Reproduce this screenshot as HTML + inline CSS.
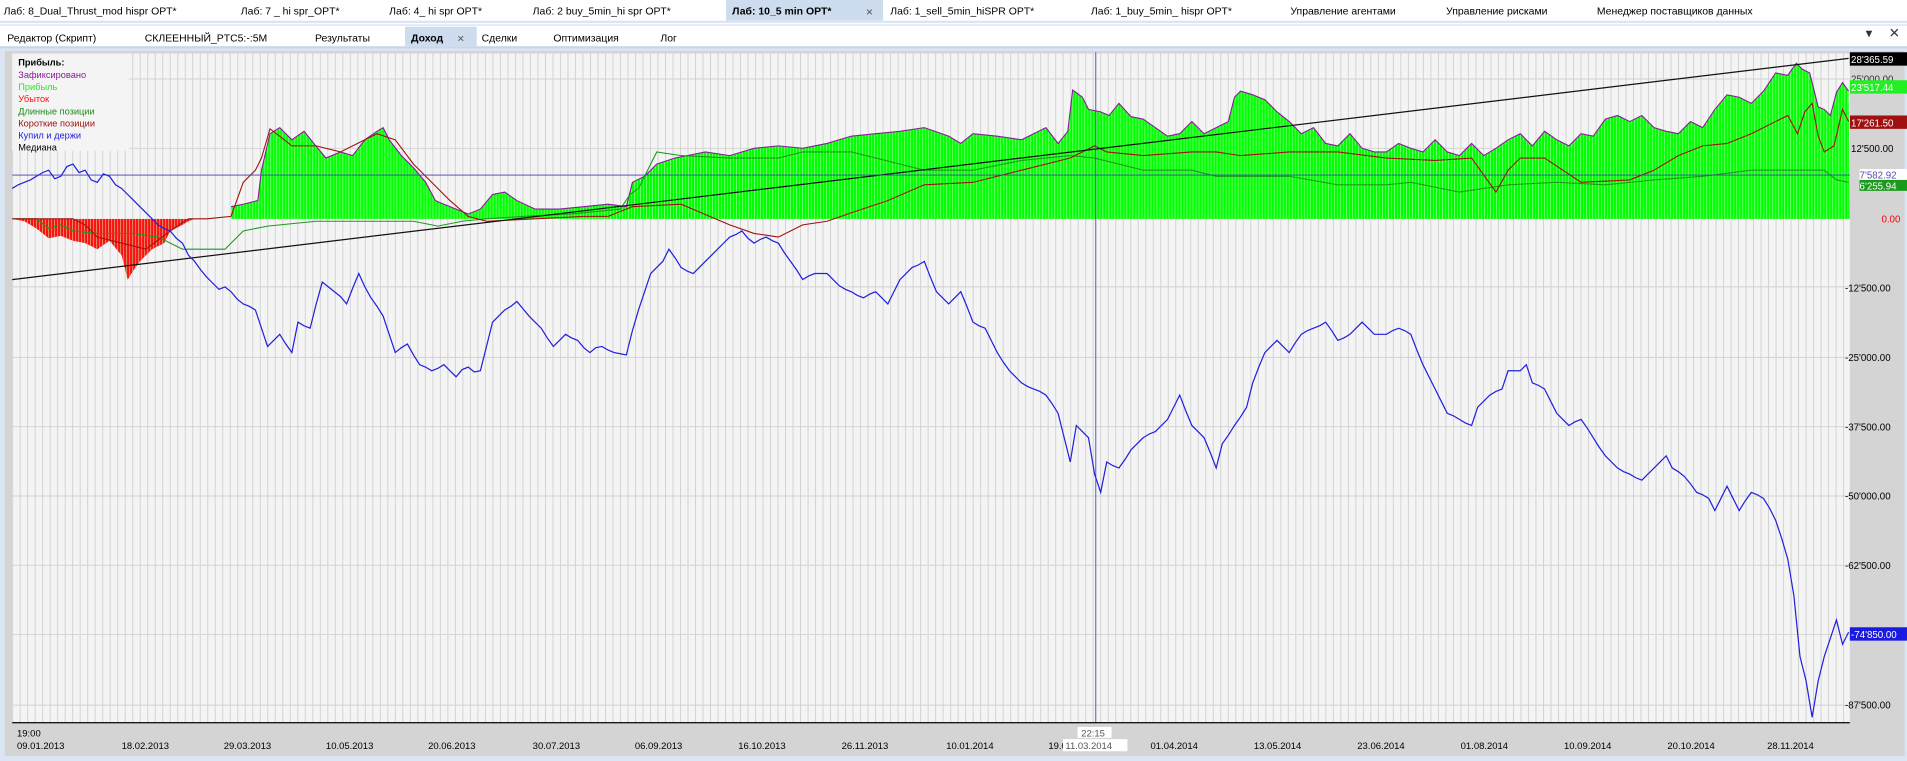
<!DOCTYPE html>
<html><head><meta charset="utf-8"><style>
html,body{margin:0;padding:0;background:#fff;overflow:hidden}
svg{display:block}
text{font-family:"Liberation Sans","DejaVu Sans",sans-serif}
</style></head><body>
<svg width="1907" height="761" viewBox="0 0 1568 626" preserveAspectRatio="none" xmlns="http://www.w3.org/2000/svg">
<defs>
<pattern id="vg" x="10" y="0" width="6.17" height="626" patternUnits="userSpaceOnUse"><rect x="0" y="0" width="0.8" height="626" fill="#d2d2d2"/></pattern>
<pattern id="bs" x="10" y="0" width="2.47" height="626" patternUnits="userSpaceOnUse"><rect x="0" y="0" width="0.45" height="626" fill="#b8f8b8"/></pattern>
<clipPath id="gc"><polygon id="gp" points="190,170 200,168 212,165 215,140 222,110 230,105 240,115 250,108 258,118 268,130 280,125 290,128 300,115 310,108 315,105 320,115 330,128 340,138 350,150 358,165 365,168 375,172 385,176 395,172 405,160 415,158 425,165 440,172 460,172 480,170 500,168 515,170 520,150 530,145 540,135 555,130 565,128 580,125 600,128 620,122 640,120 660,122 680,118 700,112 720,110 740,108 760,105 780,112 790,118 800,110 820,112 840,115 860,105 870,118 878,108 882,74 890,80 895,90 905,92 912,95 920,85 930,96 940,98 950,105 960,112 970,110 980,100 990,110 1000,105 1010,100 1015,80 1020,75 1030,78 1040,82 1050,92 1060,100 1070,110 1080,105 1090,118 1100,120 1110,110 1120,122 1130,125 1140,125 1150,118 1160,122 1170,125 1180,115 1190,125 1200,128 1210,118 1220,128 1230,122 1240,115 1250,110 1260,120 1270,108 1280,115 1290,120 1300,110 1310,112 1320,98 1330,95 1340,100 1350,95 1360,105 1370,108 1380,110 1390,100 1400,105 1410,90 1420,78 1430,80 1440,85 1450,75 1460,60 1470,62 1477,52 1482,57 1488,60 1495,88 1500,90 1505,95 1510,76 1515,68 1520,75 1521,180 190,180"/><polygon points="10,180 20,182 30,188 40,196 50,194 60,198 70,200 80,205 90,198 100,210 105,230 110,222 115,215 125,205 135,200 140,190 150,185 155,182 160,180"/></clipPath>
</defs>
<rect width="1568" height="626" fill="#fff"/>
<rect x="0" y="17" width="1568" height="2" fill="#dbe5f3"/>
<rect x="597" y="0" width="129" height="17" fill="#cddcee"/>
<g font-size="8.6" fill="#000">
<text x="3" y="12">Лаб: 8_Dual_Thrust_mod hispr OPT*</text>
<text x="198" y="12">Лаб: 7 _ hi spr_OPT*</text>
<text x="320" y="12">Лаб: 4_ hi spr OPT*</text>
<text x="438" y="12">Лаб: 2 buy_5min_hi spr OPT*</text>
<text x="602" y="12" font-weight="bold">Лаб: 10_5 min OPT*</text>
<text x="712" y="13" font-size="10" fill="#555">×</text>
<text x="732" y="12">Лаб: 1_sell_5min_hiSPR OPT*</text>
<text x="897" y="12">Лаб: 1_buy_5min_ hispr OPT*</text>
<text x="1061" y="12">Управление агентами</text>
<text x="1189" y="12">Управление рисками</text>
<text x="1313" y="12">Менеджер поставщиков данных</text>
</g>
<text x="1534" y="31" font-size="11" fill="#333">▾</text>
<text x="1553" y="31" font-size="11" fill="#333">✕</text>
<rect x="0" y="20" width="1568" height="1.2" fill="#dbe5f3"/>
<rect x="333" y="22" width="59" height="16" fill="#cddcee"/>
<rect x="0" y="38" width="1568" height="2" fill="#c7d6ec"/>
<g font-size="8.6" fill="#000">
<text x="6" y="34">Редактор (Скрипт)</text>
<text x="119" y="34">СКЛЕЕННЫЙ_PTC5:-:5M</text>
<text x="259" y="34">Результаты</text>
<text x="338" y="34" font-weight="bold">Доход</text>
<text x="376" y="35" font-size="10" fill="#555">×</text>
<text x="396" y="34">Сделки</text>
<text x="455" y="34">Оптимизация</text>
<text x="543" y="34">Лог</text>
</g>
<rect x="0" y="40" width="1568" height="586" fill="#dbe5f3"/>
<rect x="4" y="42" width="1562" height="580" fill="#d4d4d4"/>
<rect x="10" y="43" width="1511" height="551" fill="#f4f4f4"/>
<rect x="10" y="43" width="1511" height="551" fill="url(#vg)"/>
<g stroke="#d2d2d2" stroke-width="0.8">
<line x1="10" y1="65" x2="1521" y2="65"/><line x1="10" y1="122" x2="1521" y2="122"/>
<line x1="10" y1="236" x2="1521" y2="236"/><line x1="10" y1="294" x2="1521" y2="294"/>
<line x1="10" y1="351" x2="1521" y2="351"/><line x1="10" y1="408" x2="1521" y2="408"/>
<line x1="10" y1="465" x2="1521" y2="465"/><line x1="10" y1="522" x2="1521" y2="522"/>
<line x1="10" y1="580" x2="1521" y2="580"/>
</g>
<rect x="10" y="43" width="1511" height="1" fill="#d2d2d2"/>
<rect x="10" y="44" width="96" height="80" fill="#f4f4f4"/>
<g font-size="7.6">
<text x="15" y="54" font-weight="bold" fill="#000">Прибыль:</text>
<text x="15" y="64" fill="#8b1a9b">Зафиксировано</text>
<text x="15" y="74" fill="#22ee22">Прибыль</text>
<text x="15" y="84" fill="#ff1010">Убыток</text>
<text x="15" y="94" fill="#1a8a1a">Длинные позиции</text>
<text x="15" y="104" fill="#9b1010">Короткие позиции</text>
<text x="15" y="114" fill="#2020dd">Купил и держи</text>
<text x="15" y="124" fill="#000">Медиана</text>
</g>
<g clip-path="url(#gc)">
<rect x="160" y="40" width="1362" height="141" fill="#00ff00"/>
<rect x="10" y="180" width="150" height="52" fill="#ff1010"/>
<rect x="10" y="40" width="1512" height="200" fill="url(#bs)"/>
</g>
<polyline fill="none" stroke="#8b1a9b" stroke-width="0.9" points="190,170 200,168 212,165 215,140 222,110 230,105 240,115 250,108 258,118 268,130 280,125 290,128 300,115 310,108 315,105 320,115 330,128 340,138 350,150 358,165 365,168 375,172 385,176 395,172 405,160 415,158 425,165 440,172 460,172 480,170 500,168 515,170 520,150 530,145 540,135 555,130 565,128 580,125 600,128 620,122 640,120 660,122 680,118 700,112 720,110 740,108 760,105 780,112 790,118 800,110 820,112 840,115 860,105 870,118 878,108 882,74 890,80 895,90 905,92 912,95 920,85 930,96 940,98 950,105 960,112 970,110 980,100 990,110 1000,105 1010,100 1015,80 1020,75 1030,78 1040,82 1050,92 1060,100 1070,110 1080,105 1090,118 1100,120 1110,110 1120,122 1130,125 1140,125 1150,118 1160,122 1170,125 1180,115 1190,125 1200,128 1210,118 1220,128 1230,122 1240,115 1250,110 1260,120 1270,108 1280,115 1290,120 1300,110 1310,112 1320,98 1330,95 1340,100 1350,95 1360,105 1370,108 1380,110 1390,100 1400,105 1410,90 1420,78 1430,80 1440,85 1450,75 1460,60 1470,62 1477,52 1482,57 1488,60 1495,88 1500,90 1505,95 1510,76 1515,68 1520,75"/>
<polyline fill="none" stroke="#1a9a1a" stroke-width="0.9" points="10,180 30,180 40,188 50,185 60,190 80,192 110,192 130,195 150,205 185,205 200,190 220,186 260,182 300,182 340,182 360,186 380,182 400,180 430,178 470,176 510,172 518,160 525,155 540,125 560,128 600,130 640,130 660,125 700,125 740,135 760,140 800,140 840,132 880,128 900,130 940,140 980,140 1000,145 1060,145 1100,152 1140,152 1160,150 1200,158 1240,152 1280,150 1320,152 1360,148 1400,145 1440,140 1470,140 1500,140 1510,148 1520,150"/>
<polyline fill="none" stroke="#a01010" stroke-width="0.9" points="10,180 60,180 70,185 80,195 100,200 120,205 140,190 155,180 170,180 190,178 200,150 210,140 215,130 222,106 230,112 240,120 260,120 280,125 300,115 310,110 325,115 340,135 355,150 370,165 385,178 400,182 440,180 480,178 500,178 520,170 560,168 600,185 620,192 640,195 660,185 680,182 700,175 730,165 760,152 800,150 840,140 880,130 900,120 910,125 940,128 980,125 1000,125 1020,128 1060,125 1100,125 1140,130 1180,132 1210,130 1230,158 1240,140 1250,130 1270,130 1300,150 1340,148 1360,140 1380,128 1400,120 1420,118 1440,110 1460,100 1470,95 1478,110 1484,92 1490,85 1495,112 1500,125 1508,120 1515,90 1520,100"/>
<line x1="10" y1="230" x2="1520" y2="48" stroke="#111" stroke-width="1"/>
<line x1="10" y1="144" x2="1521" y2="144" stroke="#4040b0" stroke-width="0.7"/>
<line x1="901" y1="43" x2="901" y2="594" stroke="#4040c0" stroke-width="0.7"/>
<polyline fill="none" stroke="#2020e0" stroke-width="1" points="10,155 15,152 20,150 25,148 30,145 35,142 40,140 45,147 50,145 55,137 60,135 65,142 70,140 75,148 80,150 85,143 90,145 95,152 100,155 105,160 110,165 115,170 120,175 125,180 130,185 135,188 140,190 145,196 150,200 155,210 160,215 165,222 170,228 175,233 180,238 185,236 190,240 195,246 200,250 205,252 210,255 215,270 220,285 225,280 230,275 235,283 240,290 245,265 250,268 255,270 260,250 265,232 270,236 275,240 280,244 285,250 290,237 295,225 300,236 305,245 310,252 315,260 320,275 325,290 330,286 335,283 340,292 345,300 350,302 355,305 360,303 365,300 370,305 375,310 380,304 385,302 390,306 395,305 400,285 405,265 410,260 415,255 420,252 425,248 430,254 435,260 440,265 445,270 450,278 455,285 460,280 465,275 470,278 475,280 480,286 485,290 490,286 495,285 500,288 505,290 510,291 515,292 520,272 525,255 530,240 535,225 540,220 545,215 550,205 555,212 560,220 565,223 570,225 575,220 580,215 585,210 590,205 595,200 600,195 605,193 610,190 615,196 620,200 625,197 630,195 635,198 640,200 645,208 650,215 655,222 660,230 665,227 670,225 675,225 680,225 685,230 690,235 695,238 700,240 705,243 710,245 715,242 720,240 725,245 730,250 735,240 740,230 745,225 750,220 755,218 760,215 765,228 770,240 775,245 780,250 785,245 790,240 795,252 800,265 805,268 810,270 815,280 820,290 825,298 830,305 835,310 840,315 845,318 850,320 855,322 860,325 865,332 870,340 875,360 880,380 885,350 890,355 895,360 900,390 905,405 910,380 915,383 920,385 925,378 930,370 935,365 940,360 945,357 950,355 955,350 960,345 965,335 970,325 975,338 980,350 985,355 990,360 995,372 1000,385 1005,365 1010,358 1015,350 1020,343 1025,335 1030,315 1035,302 1040,290 1045,285 1050,280 1055,285 1060,290 1065,282 1070,275 1075,272 1080,270 1085,268 1090,265 1095,272 1100,280 1105,278 1110,275 1115,270 1120,265 1125,270 1130,275 1135,275 1140,275 1145,272 1150,270 1155,272 1160,275 1165,288 1170,300 1175,310 1180,320 1185,330 1190,340 1195,342 1200,345 1205,348 1210,350 1215,335 1220,330 1225,325 1230,322 1235,320 1240,305 1245,305 1250,305 1255,300 1260,315 1265,317 1270,320 1275,330 1280,340 1285,345 1290,350 1295,347 1300,345 1305,352 1310,360 1315,368 1320,375 1325,380 1330,385 1335,388 1340,390 1345,393 1350,395 1355,390 1360,385 1365,380 1370,375 1375,385 1380,388 1385,392 1390,398 1395,405 1400,407 1405,410 1410,420 1415,410 1420,400 1425,410 1430,420 1435,412 1440,405 1445,407 1450,410 1455,418 1460,428 1465,443 1470,460 1475,490 1480,540 1485,560 1490,590 1495,560 1500,540 1505,525 1510,510 1515,530 1520,520"/>
<g font-size="8" fill="#000">
<rect x="1521" y="43" width="47" height="11" fill="#000"/><text x="1522" y="52" fill="#fff">28'365.59</text>
<text x="1522" y="68" fill="#333">25'000.00</text>
<rect x="1521" y="66" width="47" height="11" fill="#22f022"/><text x="1522" y="75" fill="#fff">23'517.44</text>
<rect x="1521" y="95" width="47" height="11" fill="#a01010"/><text x="1522" y="104" fill="#fff">17'261.50</text>
<text x="1522" y="125">12'500.00</text>
<rect x="1529" y="139" width="39" height="10" fill="#fff"/><text x="1529" y="147" fill="#5050b0">7'582.92</text>
<rect x="1529" y="148" width="39" height="9" fill="#1a9a1a"/><text x="1529" y="156" fill="#fff">6'255.94</text>
<text x="1547" y="183" fill="#ff0000">0.00</text>
<text x="1517" y="240">-12'500.00</text>
<text x="1517" y="297">-25'000.00</text>
<text x="1517" y="354">-37'500.00</text>
<text x="1517" y="411">-50'000.00</text>
<text x="1517" y="468">-62'500.00</text>
<rect x="1521" y="516" width="47" height="11" fill="#1a1ae0"/><text x="1522" y="525" fill="#fff">-74'850.00</text>
<text x="1517" y="583">-87'500.00</text>
</g>
<rect x="10" y="594" width="1511" height="1" fill="#000"/>
<g font-size="7.8" fill="#000">
<text x="14" y="606">19:00</text>
<text x="14" y="616">09.01.2013</text><text x="100" y="616">18.02.2013</text><text x="184" y="616">29.03.2013</text>
<text x="268" y="616">10.05.2013</text><text x="352" y="616">20.06.2013</text><text x="438" y="616">30.07.2013</text>
<text x="522" y="616">06.09.2013</text><text x="607" y="616">16.10.2013</text><text x="692" y="616">26.11.2013</text>
<text x="778" y="616">10.01.2014</text><text x="862" y="616">19.0</text>
<rect x="886" y="598" width="28" height="9" fill="#fff"/><text x="889" y="606" fill="#555">22:15</text>
<rect x="874" y="608" width="53" height="10" fill="#fff"/><text x="876" y="616" fill="#555">11.03.2014</text>
<text x="946" y="616">01.04.2014</text><text x="1031" y="616">13.05.2014</text><text x="1116" y="616">23.06.2014</text>
<text x="1201" y="616">01.08.2014</text><text x="1286" y="616">10.09.2014</text><text x="1371" y="616">20.10.2014</text>
<text x="1453" y="616">28.11.2014</text>
</g>
</svg>
</body></html>
